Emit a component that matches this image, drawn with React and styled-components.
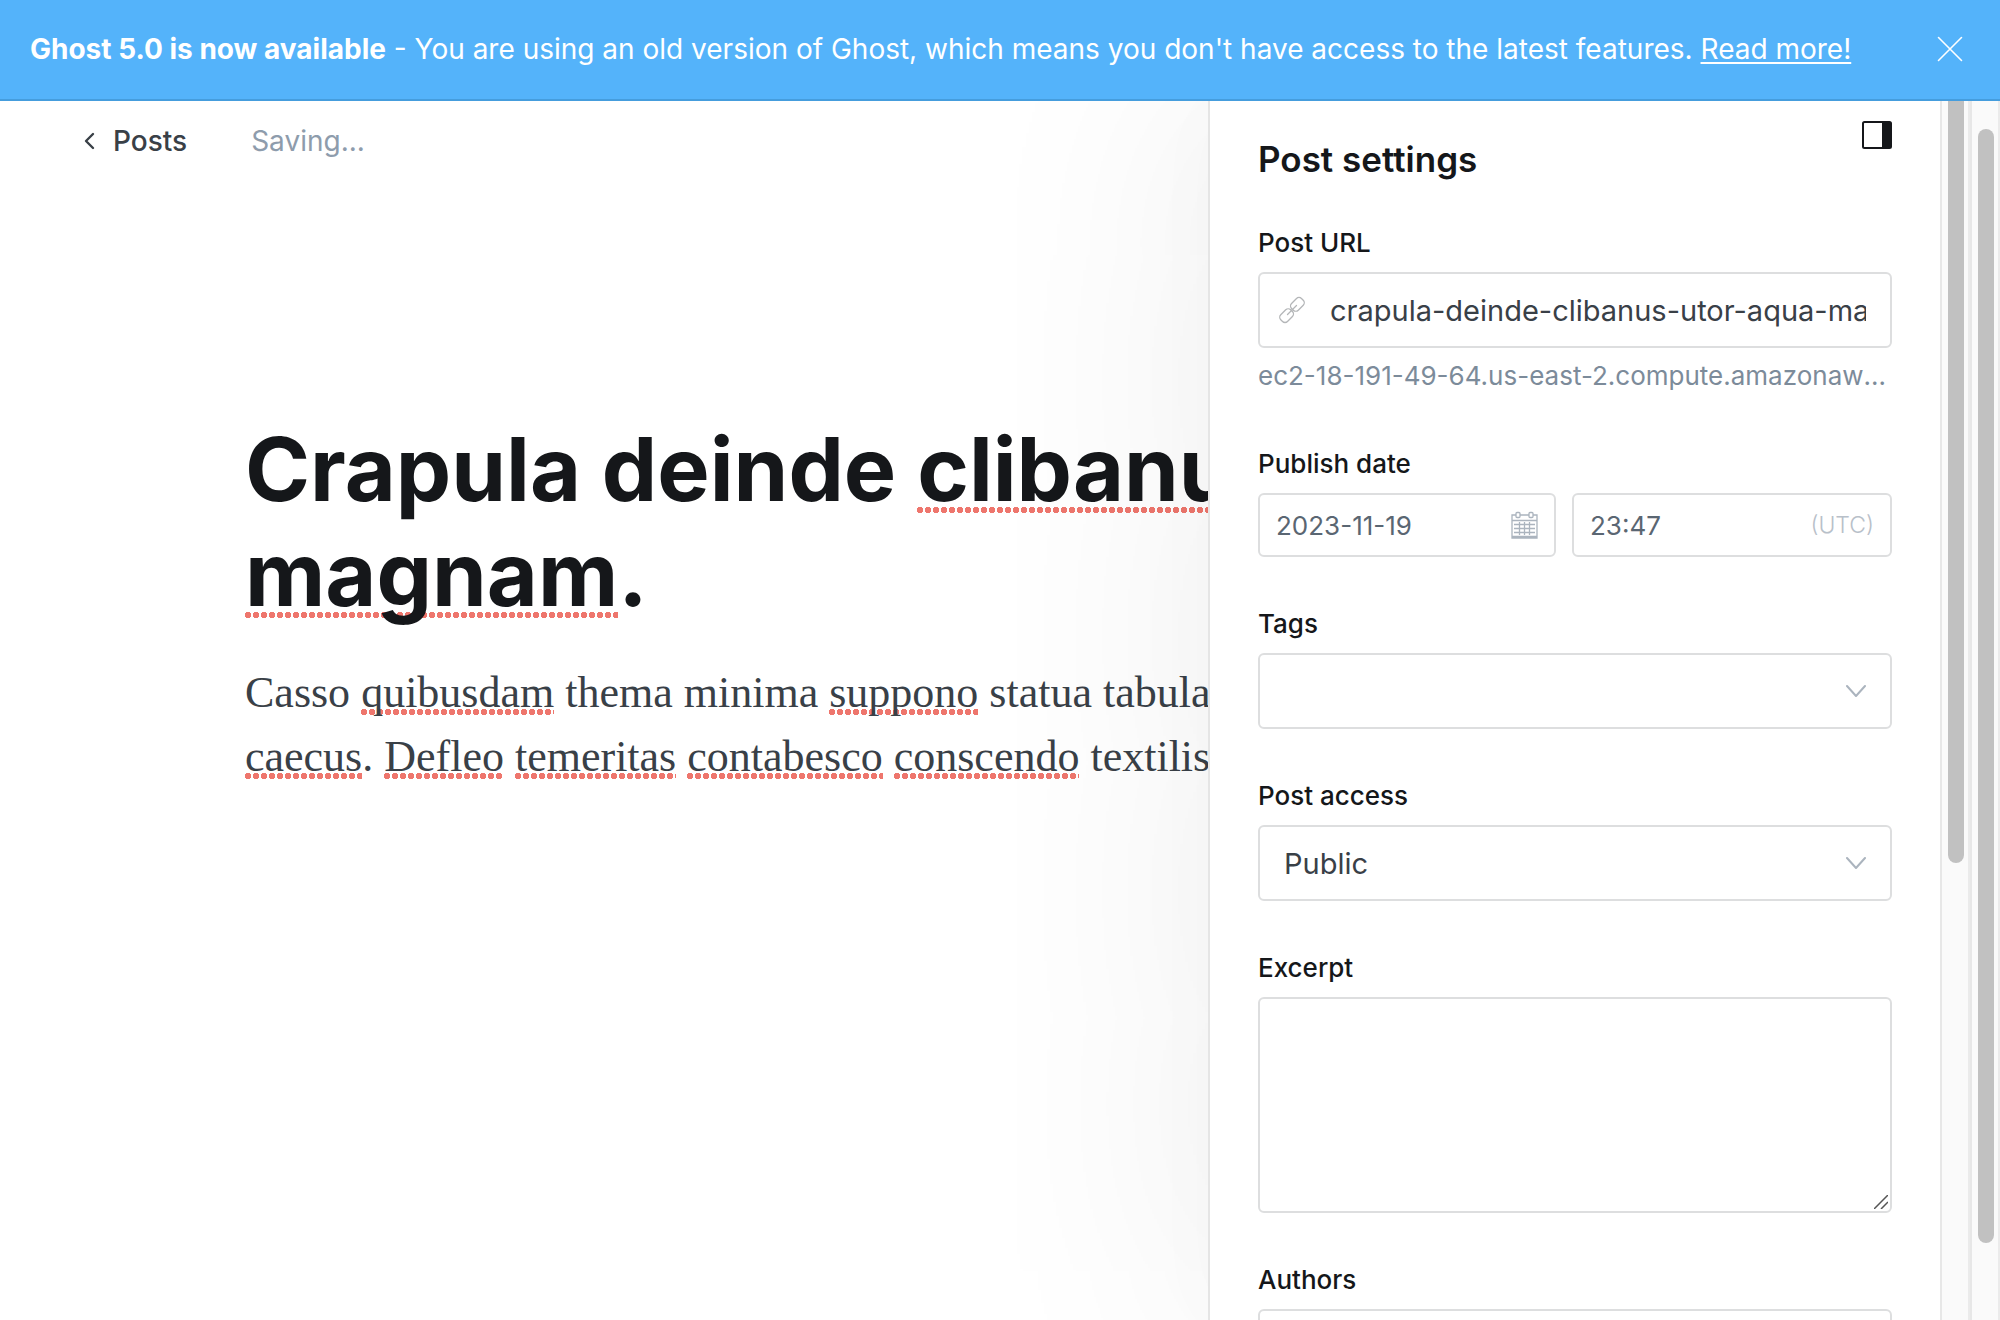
import React from 'react';
import styled, { createGlobalStyle } from 'styled-components';

const GlobalStyle = createGlobalStyle`
  *, *::before, *::after { box-sizing: border-box; }
  html, body, #root { height: 100%; }
  body {
    margin: 0;
    overflow: hidden;
    background: #fff;
    color: #15171a;
    font-family: Inter, "Liberation Sans", sans-serif;
  }
  button, input, select, textarea { font-family: inherit; }
`;

const Page = styled.div`
  display: flex;
  flex-direction: column;
  height: 100%;
`;

const Banner = styled.header`
  display: flex;
  align-items: center;
  justify-content: space-between;
  position: relative;
  z-index: 2;
  padding: 25px 36px 25px 30px;
  border-bottom: 2px solid #459ddd;
  background: #54b3fa;
  color: #fff;
  font-size: 28px;
  line-height: 49px;
  white-space: nowrap;
`;

const BannerText = styled.p`
  margin: 0;

  strong { font-weight: 700; }
  a { color: inherit; text-decoration-thickness: 2px; text-underline-offset: 3px; }
`;

const IconButton = styled.button`
  display: flex;
  padding: 0;
  border: 0;
  background: none;
  color: inherit;
  cursor: pointer;
`;

const Workspace = styled.div`
  display: flex;
  flex: 1;
  min-height: 0;
`;

const Editor = styled.main`
  flex: 1;
  min-width: 0;
  overflow: hidden;
`;

const EditorNav = styled.nav`
  display: flex;
  align-items: center;
  gap: 64px;
  padding: 20px 84px;
  font-size: 28px;
  line-height: 40px;
`;

const BackLink = styled.a`
  display: flex;
  align-items: center;
  gap: 18px;
  color: #394047;
  font-weight: 500;
  text-decoration: none;
`;

const SaveStatus = styled.span`
  color: #8e9cac;
`;

const Article = styled.article`
  padding: 236px 0 0 245px;
  white-space: nowrap;
`;

const Title = styled.h1`
  margin: 0;
  font-size: 88px;
  font-weight: 700;
  line-height: 105px;
`;

const Body = styled.p`
  margin: 34px 0 0;
  color: #394047;
  font-family: "Liberation Serif", Georgia, serif;
  font-size: 44px;
  line-height: 64px;
`;

const Misspelled = styled.span`
  background: radial-gradient(circle at 3px 3px, #ee766d 3px, transparent 3px)
    0 ${(p) => (p.$large ? 'calc(100% - 9px)' : 'calc(100% - 2px)')} / 8px 6px repeat-x;
`;

const Panel = styled.aside`
  flex: none;
  width: 732px;
  position: relative;
  z-index: 1;
  padding: 0 48px;
  border-left: 2px solid #e5e5e5;
  background: #fff;
  box-shadow: 0 0 80px rgba(0, 0, 0, 0.02), 0 0 520px rgba(0, 0, 0, 0.09);
  overflow: hidden;
`;

const PanelHeader = styled.div`
  display: flex;
  justify-content: space-between;
  align-items: flex-start;
  padding: 20px 0 42px;
`;

const PanelTitle = styled.h2`
  margin: 0;
  padding-top: 17px;
  font-size: 35px;
  font-weight: 600;
  line-height: 42px;
`;

const Form = styled.form`
  display: flex;
  flex-direction: column;
  gap: 46px;
`;

const Field = styled.div`
  display: flex;
  flex-direction: column;
`;

const Columns = styled.div`
  display: grid;
  grid-template-columns: 298fr 320fr;
  gap: 16px;
`;

const Label = styled.label`
  margin-bottom: 8px;
  font-size: 26px;
  font-weight: 500;
  line-height: 42px;
`;

const Hint = styled.p`
  margin: 7px 0 0;
  color: #7c8b9a;
  font-size: 26px;
  line-height: 42px;
  white-space: nowrap;
  overflow: hidden;
  text-overflow: ellipsis;
`;

const Control = styled.div`
  display: flex;
  align-items: center;
  height: ${(p) => (p.$compact ? 64 : 76)}px;
  padding: ${(p) => (p.$compact ? '0 16px' : '0 24px 0 18px')};
  border: 2px solid #dddedf;
  border-radius: 6px;
  background: #fff;
  color: #abb4be;
`;

const Input = styled.input`
  flex: 1;
  min-width: 0;
  width: 100%;
  height: 100%;
  margin-left: ${(p) => (p.$afterIcon ? 24 : 0)}px;
  padding: 0;
  border: 0;
  outline: 0;
  background: none;
  color: ${(p) => (p.$compact ? '#5a6672' : '#394047')};
  font-size: ${(p) => (p.$compact ? 26 : 29)}px;
`;

const Zone = styled.span`
  color: #b8c0c9;
  font-size: 23px;
  font-weight: 300;
`;

const Select = styled.select`
  flex: 1;
  min-width: 0;
  height: 100%;
  padding: 0 0 0 6px;
  border: 0;
  outline: 0;
  appearance: none;
  background: none;
  color: #394047;
  font-size: 29px;
`;

const Textarea = styled.textarea`
  display: block;
  width: 100%;
  height: 216px;
  padding: 16px 24px;
  border: 2px solid #dddedf;
  border-radius: 6px;
  outline: 0;
  resize: none;
  font-size: 29px;
`;

const ExcerptBox = styled.div`
  position: relative;

  svg { position: absolute; right: 4px; bottom: 4px; }
`;

const ScrollTrack = styled.div`
  flex: none;
  width: 30px;
  position: relative;
  z-index: 2;
  padding: ${(p) => (p.$detached ? 28 : 0)}px 0 0 6px;
  border-left: 2px solid #e7e7e7;
  border-right: 2px solid #ebebeb;
  background: #fafafa;
`;

const ScrollThumb = styled.div`
  width: 16px;
  height: ${(p) => p.$size}%;
  border-radius: ${(p) => (p.$cut ? '0 0 8px 8px' : '8px')};
  background: #c1c1c1;
`;

const CloseIcon = () => (
  <svg width="28" height="28" viewBox="0 0 28 28" fill="none" stroke="currentColor" strokeWidth="1.600" strokeLinecap="round" aria-hidden="true">
    <path d="M2.500 1.500l23 23M25.500 1.500l-23 23" />
  </svg>
);

const BackIcon = () => (
  <svg width="11" height="18" viewBox="0 0 11 18" fill="none" stroke="currentColor" strokeWidth="2.400" strokeLinecap="round" strokeLinejoin="round" aria-hidden="true">
    <path d="M9 2L2 9l7 7" />
  </svg>
);

const SidebarIcon = () => (
  <svg width="30" height="28" viewBox="0 0 30 28" aria-hidden="true">
    <rect x="1" y="1" width="28" height="26" rx="1.500" fill="none" stroke="currentColor" strokeWidth="2" />
    <path d="M20 1h8a1 1 0 0 1 1 1v24a1 1 0 0 1-1 1h-8z" fill="currentColor" />
  </svg>
);

const LinkIcon = () => (
  <svg width="28" height="28" viewBox="0 0 28 28" fill="none" stroke="#b4b6b8" strokeWidth="1.300" strokeLinecap="round" aria-hidden="true">
    <rect x="12.400" y="3.600" width="14" height="9.500" rx="3.500" transform="rotate(-45 19.400 8.350)" />
    <rect x="1.600" y="14.900" width="14" height="9.500" rx="3.500" transform="rotate(-45 8.600 19.650)" />
    <path d="M9.500 18.500l9-9" />
  </svg>
);

const CalendarIcon = () => (
  <svg width="28" height="28" viewBox="0 0 28 28" fill="none" stroke="currentColor" strokeWidth="1.300" aria-hidden="true">
    <path d="M6 4H2v23h25V4h-4M10 4h9M2 9.500h25M2 25.500h25" />
    <rect x="6" y="1.500" width="4" height="5" rx="1" />
    <rect x="19" y="1.500" width="4" height="5" rx="1" />
    <path d="M9.500 11v13M14.500 11v13M19.500 11v13M4 13.500h21M4 17.500h21M4 21.500h21" />
  </svg>
);

const ChevronIcon = () => (
  <svg width="20" height="13" viewBox="0 0 20 13" fill="none" stroke="currentColor" strokeWidth="2" strokeLinecap="round" strokeLinejoin="round" aria-hidden="true">
    <path d="M1 1l9 10 9-10" />
  </svg>
);

const GripIcon = () => (
  <svg width="14" height="14" viewBox="0 0 14 14" stroke="#555" strokeWidth="1.500" aria-hidden="true">
    <path d="M0 14L14 0M7 14l7-7" />
  </svg>
);

export default function App() {
  return (
    <Page>
      <GlobalStyle />
      <Banner>
        <BannerText>
          <strong>Ghost 5.0 is now available</strong> - You are using an old version of Ghost, which means
          you don't have access to the latest features. <a href="#upgrade">Read more!</a>
        </BannerText>
        <IconButton type="button" aria-label="Close"><CloseIcon /></IconButton>
      </Banner>
      <Workspace>
        <Editor>
          <EditorNav>
            <BackLink href="#posts"><BackIcon />Posts</BackLink>
            <SaveStatus>Saving...</SaveStatus>
          </EditorNav>
          <Article>
            <Title>
              Crapula deinde <Misspelled $large>clibanus</Misspelled><br />
              <Misspelled $large>magnam</Misspelled>.
            </Title>
            <Body>
              Casso <Misspelled>quibusdam</Misspelled> thema minima <Misspelled>suppono</Misspelled> statua tabula<br />
              <Misspelled>caecus</Misspelled>. <Misspelled>Defleo</Misspelled> <Misspelled>temeritas</Misspelled>{' '}
              <Misspelled>contabesco</Misspelled> <Misspelled>conscendo</Misspelled> textilis
            </Body>
          </Article>
        </Editor>
        <Panel>
          <PanelHeader>
            <PanelTitle>Post settings</PanelTitle>
            <IconButton type="button" aria-label="Toggle settings"><SidebarIcon /></IconButton>
          </PanelHeader>
          <Form>
            <Field>
              <Label htmlFor="url">Post URL</Label>
              <Control>
                <LinkIcon />
                <Input id="url" $afterIcon defaultValue="crapula-deinde-clibanus-utor-aqua-magnam" />
              </Control>
              <Hint>ec2-18-191-49-64.us-east-2.compute.amazonaws.com/</Hint>
            </Field>
            <Field>
              <Label htmlFor="date">Publish date</Label>
              <Columns>
                <Control $compact>
                  <Input id="date" $compact defaultValue="2023-11-19" />
                  <CalendarIcon />
                </Control>
                <Control $compact>
                  <Input $compact aria-label="Publish time" defaultValue="23:47" />
                  <Zone>(UTC)</Zone>
                </Control>
              </Columns>
            </Field>
            <Field>
              <Label htmlFor="tags">Tags</Label>
              <Control>
                <Input id="tags" />
                <ChevronIcon />
              </Control>
            </Field>
            <Field>
              <Label htmlFor="access">Post access</Label>
              <Control>
                <Select id="access"><option>Public</option></Select>
                <ChevronIcon />
              </Control>
            </Field>
            <Field>
              <Label htmlFor="excerpt">Excerpt</Label>
              <ExcerptBox>
                <Textarea id="excerpt" />
                <GripIcon />
              </ExcerptBox>
            </Field>
            <Field>
              <Label htmlFor="authors">Authors</Label>
              <Control><Input id="authors" /></Control>
            </Field>
          </Form>
        </Panel>
        <ScrollTrack aria-hidden="true"><ScrollThumb $size={62.5} $cut /></ScrollTrack>
        <ScrollTrack $detached aria-hidden="true"><ScrollThumb $size={93.5} /></ScrollTrack>
      </Workspace>
    </Page>
  );
}
